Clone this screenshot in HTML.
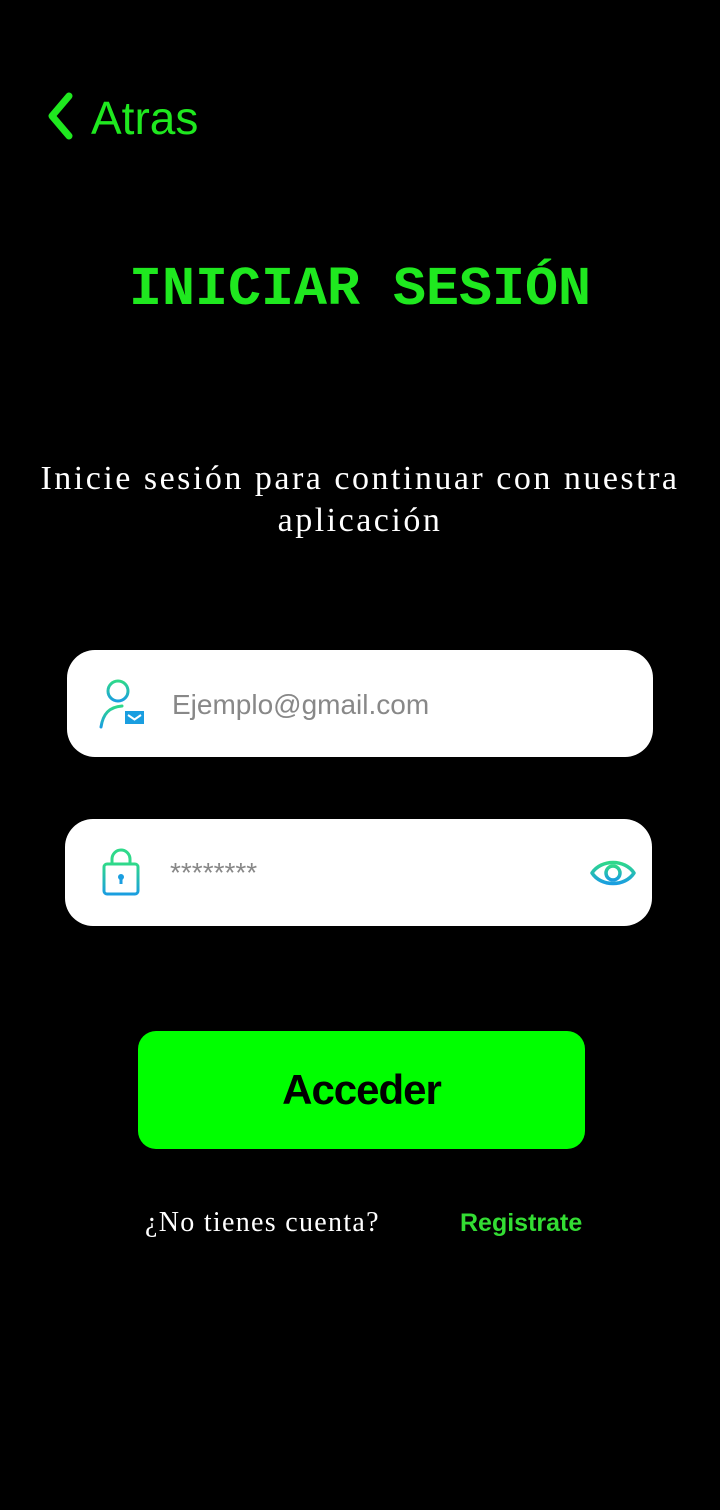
<!DOCTYPE html>
<html><head><meta charset="utf-8"><style>
body{margin:0;background:#000;width:720px;height:1510px;position:relative;overflow:hidden;font-family:"Liberation Sans",sans-serif}
.a{position:absolute}
</style></head><body>
<svg class="a" style="left:44px;top:92px" width="34" height="48" viewBox="0 0 34 48"><path d="M25 4 L8 24 L25 44" stroke="#1fe81f" stroke-width="7" fill="none" stroke-linecap="round" stroke-linejoin="round"/></svg>
<div class="a" style="left:91px;top:91px;font-size:46px;color:#1fe81f;line-height:54px">Atras</div>
<div class="a" style="left:0;width:720px;top:257px;text-align:center;font-family:'Liberation Mono',monospace;font-weight:bold;font-size:55px;color:#1fe81f;line-height:66px">INICIAR SESIÓN</div>
<div class="a" style="left:0;width:720px;top:458px;text-align:center;font-family:'Liberation Serif',serif;font-size:34px;letter-spacing:2.5px;color:#fff;line-height:42px">Inicie sesión para continuar con nuestra<br>aplicación</div>
<div class="a" style="left:67px;top:650px;width:586px;height:107px;background:#fff;border-radius:28px"></div>
<svg class="a" style="left:94px;top:676px" width="56" height="56" viewBox="0 0 56 56">
<defs><linearGradient id="g" x1="0" y1="0" x2="0" y2="1"><stop offset="0" stop-color="#2fd98a"/><stop offset="1" stop-color="#1a9ee0"/></linearGradient></defs>
<circle cx="24" cy="15" r="10" stroke="url(#g)" stroke-width="3" fill="none"/>
<path d="M7 51 C9 38 15 31 28 30" stroke="url(#g)" stroke-width="3" fill="none" stroke-linecap="round"/>
<rect x="31" y="35" width="19" height="13" fill="#1a9ee0"/>
<path d="M34 39 L40.5 43.5 L47 39" stroke="#fff" stroke-width="2" fill="none"/>
</svg>
<div class="a" style="left:172px;top:688px;font-size:28px;color:#888;line-height:34px">Ejemplo@gmail.com</div>
<div class="a" style="left:65px;top:819px;width:587px;height:107px;background:#fff;border-radius:28px"></div>
<svg class="a" style="left:100px;top:847px" width="42" height="52" viewBox="0 0 42 52">
<path d="M12 17 V12 A9 9 0 0 1 30 12 V17" stroke="#2fd98a" stroke-width="3" fill="none"/>
<rect x="4" y="17" width="34" height="30" rx="3" stroke="url(#g)" stroke-width="3" fill="none"/>
<circle cx="21" cy="30" r="3" fill="#1a9ee0"/><rect x="19.5" y="30" width="3" height="7" fill="#1a9ee0"/>
</svg>
<div class="a" style="left:170px;top:857px;font-size:28px;color:#888;line-height:32px">********</div>
<svg class="a" style="left:589px;top:854px" width="48" height="38" viewBox="0 0 48 38">
<path d="M3 19 C12 5 36 5 45 19 C36 33 12 33 3 19 Z" stroke="url(#g)" stroke-width="3.5" fill="none" stroke-linejoin="round"/>
<circle cx="24" cy="19" r="7" stroke="url(#g)" stroke-width="3.5" fill="none"/>
</svg>
<div class="a" style="left:138px;top:1031px;width:447px;height:118px;background:#00ff00;border-radius:18px;text-align:center;line-height:118px;font-size:42px;font-weight:bold;letter-spacing:-1px;color:#000">Acceder</div>
<div class="a" style="left:145px;top:1205px;font-family:'Liberation Serif',serif;font-size:28px;letter-spacing:1.3px;color:#fff;line-height:36px">¿No tienes cuenta?</div>
<div class="a" style="left:460px;top:1207px;font-size:25px;font-weight:bold;color:#33dd33;line-height:32px">Registrate</div>
</body></html>
